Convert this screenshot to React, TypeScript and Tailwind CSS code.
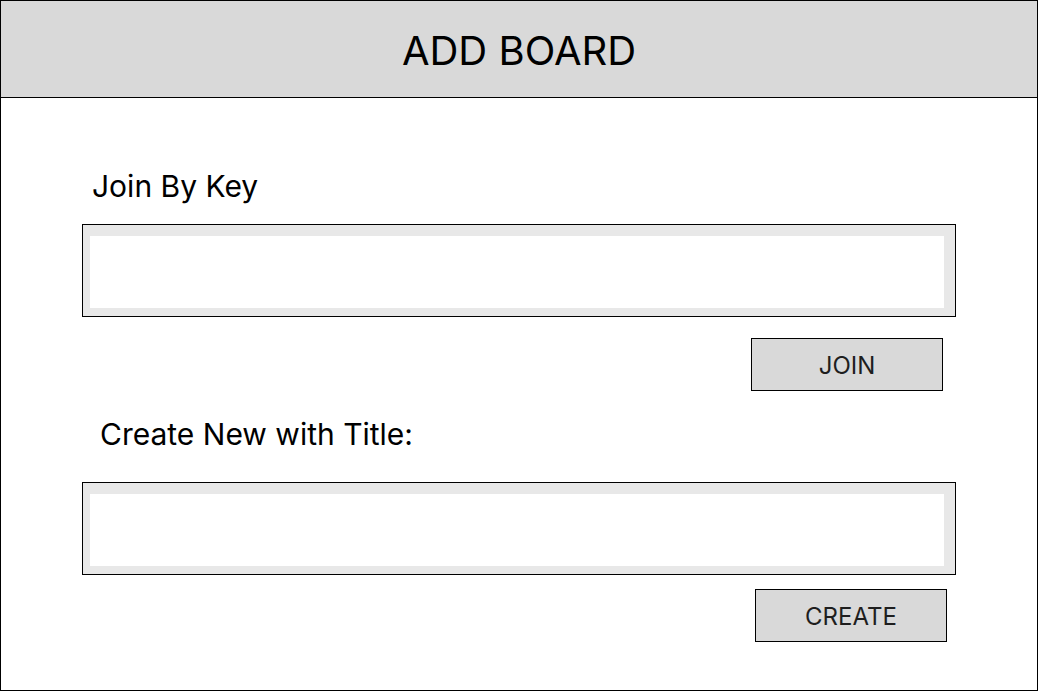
import React from "react";

export default function App() {
  return (
    <div
      className="w-[1038px] h-[691px] border border-black bg-white box-border overflow-hidden text-black"
      style={{ fontFamily: "Inter, 'Noto Sans', sans-serif" }}
    >
      <div className="h-[97px] bg-[#d9d9d9] border-b border-black flex justify-center pt-[30px] box-border">
        <h1 className="text-[40px] leading-none font-normal">ADD BOARD</h1>
      </div>

      <div className="flex flex-col">
        <label className="mt-[73px] ml-[91px] text-[30px] leading-none">Join By Key</label>
        <div className="mt-[23px] ml-[81px] w-[874px] h-[93px] border border-black bg-[#e8e8e8] box-border pt-[11px] pl-[7px] pr-[11px] pb-[8px]">
          <input type="text" className="w-full h-full bg-white outline-none border-0" />
        </div>
        <button className="mt-[21px] ml-[750px] w-[192px] h-[53px] border border-black bg-[#d9d9d9] flex items-center justify-center pt-[2px] text-[24px] leading-none text-[#1e1e1e]">
          JOIN
        </button>

        <label className="mt-[28px] ml-[99px] text-[30px] leading-none">Create New with Title:</label>
        <div className="mt-[33px] ml-[81px] w-[874px] h-[93px] border border-black bg-[#e8e8e8] box-border pt-[11px] pl-[7px] pr-[11px] pb-[8px]">
          <input type="text" className="w-full h-full bg-white outline-none border-0" />
        </div>
        <button className="mt-[14px] ml-[754px] w-[192px] h-[53px] border border-black bg-[#d9d9d9] flex items-center justify-center pt-[2px] text-[24px] leading-none text-[#1e1e1e]">
          CREATE
        </button>
      </div>
    </div>
  );
}
